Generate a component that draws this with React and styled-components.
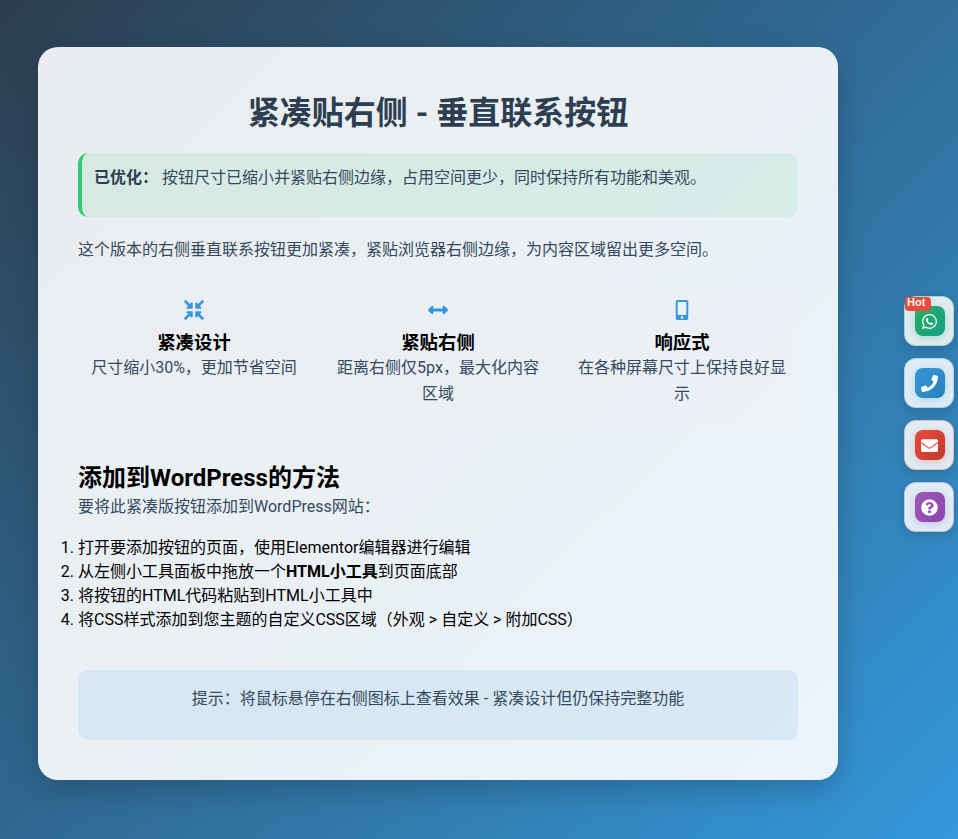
import React from "react"
import styled, { createGlobalStyle } from "styled-components"
import {
  FaCompressArrowsAlt,
  FaArrowsAltH,
  FaMobileAlt,
  FaWhatsapp,
  FaPhone,
  FaEnvelope,
  FaQuestionCircle,
} from "react-icons/fa"

const GlobalStyle = createGlobalStyle`
  html, body {
    margin: 0;
    padding: 0;
  }
  body {
    min-height: 839px;
    font-family: Roboto, "Noto Sans CJK SC", sans-serif;
    background: linear-gradient(135deg, #2c3e50, #3498db);
    overflow: hidden;
  }
`

const Page = styled.div`
  box-sizing: border-box;
  height: 839px;
  padding: 47px 0 0 38px;
`

const Card = styled.main`
  box-sizing: border-box;
  width: 800px;
  height: 733px;
  padding: 40px;
  border-radius: 20px;
  background: rgba(255, 255, 255, 0.9);
  box-shadow: 0 10px 30px rgba(0, 0, 0, 0.2);
`

const Title = styled.h1`
  margin: 0 0 14px;
  font-size: 32px;
  line-height: 52px;
  font-weight: 700;
  text-align: center;
  color: #2c3e50;
`

const Notice = styled.div`
  box-sizing: border-box;
  height: 64px;
  padding: 12px;
  border-left: 4px solid #2ecc71;
  border-radius: 10px;
  background: rgba(46, 204, 113, 0.1);
  font-size: 16px;
  line-height: 26px;
  color: #34495e;

  strong {
    color: #2c3e50;
  }
`

const Intro = styled.p`
  margin: 20px 0 25px;
  font-size: 16px;
  line-height: 26px;
  color: #34495e;
`

const Features = styled.section`
  display: grid;
  grid-template-columns: repeat(3, 1fr);
  gap: 12px;
  margin-bottom: 32px;
`

const Feature = styled.article`
  box-sizing: border-box;
  height: 142px;
  padding: 10px;
  text-align: center;
  border-radius: 10px;
  background: rgba(236, 240, 241, 0.3);
`

const FeatureIcon = styled.div`
  display: flex;
  justify-content: center;
  align-items: center;
  height: 24px;
  margin-bottom: 8px;
  font-size: 20px;
  color: #3498db;
`

const FeatureTitle = styled.h3`
  margin: 0;
  font-size: 18.4px;
  line-height: 25px;
  font-weight: 700;
  color: #000;
`

const FeatureText = styled.p`
  margin: 0;
  font-size: 16px;
  line-height: 26px;
  color: #34495e;
`

const SectionTitle = styled.h2`
  margin: 0;
  font-size: 24px;
  line-height: 32px;
  font-weight: 700;
  color: #000;
`

const SectionLead = styled.p`
  margin: 0 0 16px;
  font-size: 16px;
  line-height: 26px;
  color: #34495e;
`

const Steps = styled.ol`
  margin: 0 0 38px;
  padding: 0;
  font-size: 16px;
  line-height: 24px;
  color: #000;
`

const Tip = styled.div`
  box-sizing: border-box;
  height: 70px;
  padding: 16px;
  border-radius: 10px;
  background: rgba(52, 152, 219, 0.1);
  font-size: 16px;
  line-height: 26px;
  text-align: center;
  color: #34495e;
`

const ContactBar = styled.aside`
  position: fixed;
  top: 296px;
  right: 4px;
  display: flex;
  flex-direction: column;
  gap: 12px;
`

const ContactButton = styled.a`
  position: relative;
  box-sizing: border-box;
  display: flex;
  align-items: center;
  justify-content: center;
  width: 50px;
  height: 50px;
  padding-left: 1px;
  border: 1px solid ${({ $glow }) => $glow};
  border-radius: 12px;
  background: rgba(255, 255, 255, 0.85);
  box-shadow: 0 4px 12px rgba(0, 0, 0, 0.15);
`

const ContactIcon = styled.span`
  display: flex;
  align-items: center;
  justify-content: center;
  width: 30px;
  height: 30px;
  border-radius: 8px;
  font-size: 17px;
  color: #fff;
  background: ${({ $from, $to }) => `linear-gradient(135deg, ${$from}, ${$to})`};
  box-shadow: 0 2px 8px ${({ $glow }) => $glow};
`

const Badge = styled.span`
  position: absolute;
  top: 0;
  left: 0;
  box-sizing: border-box;
  width: 26px;
  height: 14px;
  padding-left: 2px;
  border-radius: 2px 4px 4px 4px;
  background: #e74c3c;
  font-family: "Liberation Sans", sans-serif;
  font-size: 11px;
  line-height: 11px;
  font-weight: 700;
  color: #fff;
`

const features = [
  { icon: <FaCompressArrowsAlt />, title: "紧凑设计", text: "尺寸缩小30%，更加节省空间" },
  { icon: <FaArrowsAltH />, title: "紧贴右侧", text: "距离右侧仅5px，最大化内容区域" },
  { icon: <FaMobileAlt />, title: "响应式", text: "在各种屏幕尺寸上保持良好显示" },
]

const contacts = [
  { icon: <FaWhatsapp />, from: "#27ae60", to: "#16a085", glow: "rgba(39, 174, 96, 0.3)", hot: true },
  { icon: <FaPhone />, from: "#3498db", to: "#2980b9", glow: "rgba(52, 152, 219, 0.3)" },
  { icon: <FaEnvelope />, from: "#e74c3c", to: "#c0392b", glow: "rgba(231, 76, 60, 0.3)" },
  { icon: <FaQuestionCircle />, from: "#9b59b6", to: "#8e44ad", glow: "rgba(155, 89, 182, 0.3)" },
]

export default function App() {
  return (
    <Page>
      <GlobalStyle />
      <Card>
        <Title>紧凑贴右侧 - 垂直联系按钮</Title>
        <Notice>
          <strong>已优化：</strong> 按钮尺寸已缩小并紧贴右侧边缘，占用空间更少，同时保持所有功能和美观。
        </Notice>
        <Intro>这个版本的右侧垂直联系按钮更加紧凑，紧贴浏览器右侧边缘，为内容区域留出更多空间。</Intro>
        <Features>
          {features.map(f => (
            <Feature key={f.title}>
              <FeatureIcon>{f.icon}</FeatureIcon>
              <FeatureTitle>{f.title}</FeatureTitle>
              <FeatureText>{f.text}</FeatureText>
            </Feature>
          ))}
        </Features>
        <SectionTitle>添加到WordPress的方法</SectionTitle>
        <SectionLead>要将此紧凑版按钮添加到WordPress网站：</SectionLead>
        <Steps>
          <li>打开要添加按钮的页面，使用Elementor编辑器进行编辑</li>
          <li>
            从左侧小工具面板中拖放一个<strong>HTML小工具</strong>到页面底部
          </li>
          <li>将按钮的HTML代码粘贴到HTML小工具中</li>
          <li>将CSS样式添加到您主题的自定义CSS区域（外观 &gt; 自定义 &gt; 附加CSS）</li>
        </Steps>
        <Tip>提示：将鼠标悬停在右侧图标上查看效果 - 紧凑设计但仍保持完整功能</Tip>
      </Card>
      <ContactBar>
        {contacts.map(c => (
          <ContactButton key={c.from} $glow={c.glow}>
            {c.hot && <Badge>Hot</Badge>}
            <ContactIcon $from={c.from} $to={c.to} $glow={c.glow}>
              {c.icon}
            </ContactIcon>
          </ContactButton>
        ))}
      </ContactBar>
    </Page>
  )
}
